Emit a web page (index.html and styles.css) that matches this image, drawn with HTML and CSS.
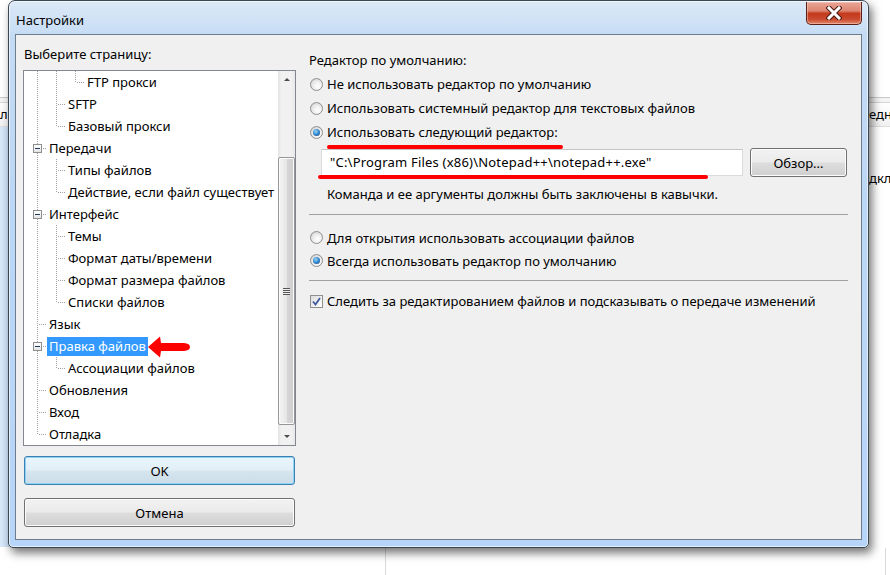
FILE: index.html
```html
<!DOCTYPE html>
<html lang="ru">
<head>
  <meta charset="UTF-8">
  <meta name="viewport" content="width=device-width, initial-scale=1.0">
  <title>Настройки</title>
  <link rel="stylesheet" href="styles.css">
</head>
<body>
<div class="desktop">

  <!-- bits of the application behind the dialog -->
  <div class="behind behind-left">
    <div class="behind-head"></div>
    <div class="behind-row">ле</div>
    <div class="behind-glass"></div>
  </div>
  <div class="behind behind-right">
    <div class="behind-head"></div>
    <div class="behind-row">едн</div>
    <div class="behind-text">дкл</div>
  </div>
  <div class="behind-line line-a"></div>
  <div class="behind-line line-b"></div>

  <div class="window">
    <div class="titlebar">
      <span class="title">Настройки</span>
      <div class="close-btn">
        <svg width="16" height="14" viewBox="0 0 16 14">
          <path d="M3 2 L13 12 M13 2 L3 12" stroke="#4a1a12" stroke-width="5" stroke-linecap="square"/>
          <path d="M3 2 L13 12 M13 2 L3 12" stroke="#fff" stroke-width="3" stroke-linecap="square"/>
        </svg>
      </div>
    </div>

    <div class="client">
      <div class="left-panel">
        <div class="caption">Выберите страницу:</div>

        <div class="tree">
          <div class="tree-list">
            <div class="node"><span class="g pipe"></span><span class="g pipe"></span><span class="g elbow"></span><span class="label">FTP прокси</span></div>
            <div class="node"><span class="g pipe"></span><span class="g tee"></span><span class="label">SFTP</span></div>
            <div class="node"><span class="g pipe"></span><span class="g elbow"></span><span class="label">Базовый прокси</span></div>
            <div class="node"><span class="g tee"><i class="expander"></i></span><span class="label">Передачи</span></div>
            <div class="node"><span class="g pipe"></span><span class="g tee"></span><span class="label">Типы файлов</span></div>
            <div class="node"><span class="g pipe"></span><span class="g elbow"></span><span class="label">Действие, если файл существует</span></div>
            <div class="node"><span class="g tee"><i class="expander"></i></span><span class="label">Интерфейс</span></div>
            <div class="node"><span class="g pipe"></span><span class="g tee"></span><span class="label">Темы</span></div>
            <div class="node"><span class="g pipe"></span><span class="g tee"></span><span class="label">Формат даты/времени</span></div>
            <div class="node"><span class="g pipe"></span><span class="g tee"></span><span class="label">Формат размера файлов</span></div>
            <div class="node"><span class="g pipe"></span><span class="g elbow"></span><span class="label">Списки файлов</span></div>
            <div class="node"><span class="g tee"></span><span class="label">Язык</span></div>
            <div class="node"><span class="g tee"><i class="expander"></i></span><span class="label selected">Правка файлов</span></div>
            <div class="node"><span class="g pipe"></span><span class="g elbow"></span><span class="label">Ассоциации файлов</span></div>
            <div class="node"><span class="g tee"></span><span class="label">Обновления</span></div>
            <div class="node"><span class="g tee"></span><span class="label">Вход</span></div>
            <div class="node"><span class="g elbow"></span><span class="label">Отладка</span></div>
          </div>

          <div class="scrollbar">
            <div class="sb-arrow"><span class="tri-up"></span></div>
            <div class="sb-track">
              <div class="sb-thumb"><span class="grip"></span></div>
            </div>
            <div class="sb-arrow"><span class="tri-down"></span></div>
          </div>

          <!-- red hand-drawn arrow pointing at the selected node -->
          <svg class="red-arrow" width="44" height="24" viewBox="0 0 44 24">
            <path d="M1 12 L13 1.5 L14 8 L37 8 Q43 8.5 43 12 Q43 15.5 37 16 L14 16 L13 22.5 Z" fill="#f00"/>
          </svg>
        </div>

        <button class="btn btn-default">OK</button>
        <button class="btn btn-cancel">Отмена</button>
      </div>

      <div class="right-panel">
        <div class="heading">Редактор по умолчанию:</div>
        <label class="option"><span class="radio"></span>Не использовать редактор по умолчанию</label>
        <label class="option"><span class="radio"></span>Использовать системный редактор для текстовых файлов</label>
        <label class="option"><span class="radio checked"></span>Использовать следующий редактор:</label>

        <div class="editor-row">
          <div class="textbox">"C:\Program Files (x86)\Notepad++\notepad++.exe"</div>
          <button class="btn btn-browse">Обзор...</button>
        </div>
        <div class="note">Команда и ее аргументы должны быть заключены в кавычки.</div>

        <div class="separator"></div>
        <label class="option option-tight first"><span class="radio"></span>Для открытия использовать ассоциации файлов</label>
        <label class="option option-tight"><span class="radio checked"></span>Всегда использовать редактор по умолчанию</label>

        <div class="separator sep-2"></div>
        <label class="option option-check"><span class="checkbox">
          <svg width="9" height="9" viewBox="0 0 9 9"><path d="M1 4.5 L3.5 7.5 L8 1" fill="none" stroke="#3d5a9e" stroke-width="1.8"/></svg>
        </span>Следить за редактированием файлов и подсказывать о передаче изменений</label>

        <div class="scribble scribble-1"></div>
        <div class="scribble scribble-2"></div>
      </div>
    </div>
  </div>
</div>
</body>
</html>
```

FILE: styles.css
```css
body {
  margin: 0;
  background: #ffffff;
  font-family: 'Noto Sans', 'Open Sans', sans-serif;
  font-size: 13px;
  color: #000000;
  overflow: hidden;
}

.desktop {
  position: relative;
  width: 890px;
  height: 575px;
  overflow: hidden;
}

/* application behind the dialog */
.behind {
  position: absolute;
  top: 97px;
  height: 460px;
}
.behind-left {
  left: 0;
  width: 12px;
}
.behind-right {
  left: 862px;
  width: 28px;
}
.behind-head {
  height: 4px;
  border-top: 1px solid #c9c9c9;
  border-bottom: 1px solid #d5d5d5;
  background: #f4f4f4;
}
.behind-row {
  height: 23px;
  line-height: 23px;
  background: linear-gradient(#ffffff, #f1f1f1);
  border-bottom: 1px solid #dedede;
  white-space: nowrap;
  overflow: hidden;
}
.behind-right .behind-row {
  padding-left: 7px;
}
.behind-text {
  margin-top: 42px;
  padding-left: 7px;
  white-space: nowrap;
}
.behind-glass {
  height: 420px;
  background: linear-gradient(to right, #d9e9f9, #c7def6);
}
.behind-line {
  position: absolute;
  top: 548px;
  width: 1px;
  height: 27px;
  background: #dadada;
}
.line-a { left: 385px; }
.line-b { left: 885px; }

/* dialog window */
.window {
  position: absolute;
  left: 8px;
  top: 0;
  width: 861px;
  height: 548px;
  box-sizing: border-box;
  display: flex;
  flex-direction: column;
  border: 1px solid #3b4653;
  border-radius: 7px 7px 5px 5px;
  background: linear-gradient(to bottom, #dce9f7 0, #c9def5 30px, #c4dbf4 34px, #bcd7f6 200px, #b7d5f8 100%);
  box-shadow: 3px 5px 10px rgba(0, 0, 0, 0.55), inset 0 0 0 1px rgba(255, 255, 255, 0.6);
}

.titlebar {
  height: 33px;
  flex: none;
  display: flex;
  align-items: flex-start;
  padding: 0 6px 0 7px;
}
.title {
  margin-top: 11px;
  line-height: 16px;
}
.close-btn {
  margin-left: auto;
  margin-top: 1px;
  width: 54px;
  height: 22px;
  display: flex;
  align-items: center;
  justify-content: center;
  border: 1px solid #5a1f17;
  border-top: none;
  border-radius: 0 0 5px 5px;
  background: linear-gradient(to bottom, #e9a596 0, #dc8672 40%, #c43a1d 52%, #c9492e 78%, #e3896c 100%);
  box-shadow: inset 0 0 0 1px rgba(255, 220, 210, 0.45);
}

.client {
  flex: 1;
  margin: 0 6px 7px 6px;
  border: 1px solid #6f7c8c;
  background: #f0f0f0;
  display: flex;
}

/* left side: tree of pages */
.left-panel {
  width: 273px;
  margin-left: 7px;
  display: flex;
  flex-direction: column;
}
.caption {
  margin-top: 11px;
  line-height: 16px;
  padding-left: 1px;
}
.tree {
  position: relative;
  margin-top: 8px;
  height: 376px;
  box-sizing: border-box;
  border: 1px solid #828790;
  background: #ffffff;
  display: flex;
}
.tree-list {
  flex: 1;
  padding-left: 4px;
  overflow: hidden;
}
.node {
  height: 22px;
  display: flex;
  align-items: center;
  white-space: nowrap;
}
.g {
  width: 19px;
  height: 22px;
  flex: none;
  display: flex;
  align-items: center;
  padding-left: 5px;
  box-sizing: border-box;
  background-repeat: no-repeat;
}
.pipe {
  background-image: repeating-linear-gradient(to bottom, #a0a0a0 0 1px, transparent 1px 2px);
  background-position: 9px 0;
  background-size: 1px 22px;
}
.tee {
  background-image:
    repeating-linear-gradient(to bottom, #a0a0a0 0 1px, transparent 1px 2px),
    repeating-linear-gradient(to right, #a0a0a0 0 1px, transparent 1px 2px);
  background-position: 9px 0, 11px 11px;
  background-size: 1px 22px, 8px 1px;
}
.elbow {
  background-image:
    repeating-linear-gradient(to bottom, #a0a0a0 0 1px, transparent 1px 2px),
    repeating-linear-gradient(to right, #a0a0a0 0 1px, transparent 1px 2px);
  background-position: 9px 0, 11px 11px;
  background-size: 1px 12px, 8px 1px;
}
.expander {
  width: 9px;
  height: 9px;
  box-sizing: border-box;
  border: 1px solid #8e8f8f;
  background: linear-gradient(#ffffff, #e4e4e4);
  display: flex;
  align-items: center;
  justify-content: center;
}
.expander::before {
  content: "";
  width: 5px;
  height: 1px;
  background: #1e395b;
}
.label {
  height: 19px;
  line-height: 19px;
  padding: 0 2px;
}
.label.selected {
  background: #3399ff;
  color: #ffffff;
}

.scrollbar {
  width: 17px;
  flex: none;
  display: flex;
  flex-direction: column;
  background: linear-gradient(to right, #e3e3e3, #f1f1f1 20%, #f1f1f1 80%, #e8e8e8);
}
.sb-arrow {
  height: 17px;
  display: flex;
  align-items: center;
  justify-content: center;
}
.tri-up {
  border-left: 3px solid transparent;
  border-right: 3px solid transparent;
  border-bottom: 3px solid #4d4d4d;
}
.tri-down {
  border-left: 3px solid transparent;
  border-right: 3px solid transparent;
  border-top: 3px solid #4d4d4d;
}
.sb-track {
  flex: 1;
}
.sb-thumb {
  margin-top: 69px;
  height: 268px;
  box-sizing: border-box;
  border: 1px solid #979797;
  border-radius: 2px;
  background: linear-gradient(to right, #f4f4f4 0, #e6e6e6 50%, #d6d6d6 51%, #cfcfcf 100%);
  box-shadow: inset 0 0 0 1px #fbfbfb;
  display: flex;
  align-items: center;
  justify-content: center;
}
.grip {
  width: 7px;
  height: 7px;
  background: repeating-linear-gradient(to bottom, #555 0 1px, #eee 1px 2px);
}

.red-arrow {
  position: absolute;
  left: 123px;
  top: 264px;
  filter: blur(0.7px);
}

/* buttons */
.btn {
  font-family: inherit;
  font-size: 13px;
  font-weight: normal;
  color: #000000;
  height: 29px;
  box-sizing: border-box;
  border: 1px solid #707070;
  border-radius: 3px;
  background: linear-gradient(to bottom, #f2f2f2 0, #ebebeb 48%, #dddddd 52%, #cfcfcf 100%);
  box-shadow: inset 0 0 0 1px #fcfcfc;
  padding: 0;
}
.left-panel .btn {
  width: 271px;
  margin-left: 1px;
}
.btn-default {
  margin-top: 10px;
  border-color: #3c7fb1;
  box-shadow: inset 0 0 0 1px #8ed3f6;
  background: linear-gradient(to bottom, #eaf6fd 0, #e3eff7 48%, #d6e5ee 52%, #cbdde9 100%);
}
.btn-cancel {
  margin-top: 13px;
}

/* right side: editor options */
.right-panel {
  position: relative;
  margin-left: 13px;
  width: 539px;
  padding-top: 17px;
  display: flex;
  flex-direction: column;
}
.heading {
  line-height: 16px;
  margin-bottom: 4px;
}
.option {
  height: 24px;
  display: flex;
  align-items: center;
  white-space: nowrap;
}
.option-tight {
  height: 23px;
}
.option-tight.first {
  margin-top: 11px;
}
.option-check {
  margin-top: 8px;
}
.radio {
  width: 13px;
  height: 13px;
  box-sizing: border-box;
  margin: 0 4px 0 1px;
  border: 1px solid #8e8f8f;
  border-radius: 50%;
  background: radial-gradient(circle at 60% 65%, #ffffff 0, #f0f0f0 40%, #c8c8c8 100%);
  display: flex;
  align-items: center;
  justify-content: center;
}
.radio.checked::before {
  content: "";
  width: 7px;
  height: 7px;
  border-radius: 50%;
  background: radial-gradient(circle at 40% 35%, #9fd6f8 0, #3b8fd4 45%, #0d3b74 100%);
}
.checkbox {
  width: 13px;
  height: 13px;
  box-sizing: border-box;
  margin: 0 4px 0 1px;
  border: 1px solid #8e8f8f;
  background: linear-gradient(135deg, #dcdcdc, #ffffff);
  display: flex;
  align-items: center;
  justify-content: center;
}

.editor-row {
  margin-top: 4px;
  height: 29px;
  display: flex;
  align-items: center;
}
.textbox {
  margin-left: 12px;
  width: 422px;
  height: 27px;
  box-sizing: border-box;
  border: 1px solid #dadada;
  border-top-color: #c5c5c5;
  background: #ffffff;
  line-height: 25px;
  padding-left: 8px;
  letter-spacing: 0.2px;
  white-space: nowrap;
}
.btn-browse {
  margin-left: 7px;
  width: 97px;
}
.note {
  margin-top: 9px;
  margin-left: 18px;
  line-height: 16px;
}
.separator {
  margin-top: 12px;
  height: 1px;
  background: #a0a0a0;
}
.sep-2 {
  margin-top: 8px;
}

/* red marker strokes drawn over the screenshot */
.scribble {
  position: absolute;
  height: 4px;
  background: #ff0000;
  border-radius: 2px;
  filter: blur(0.7px);
}
.scribble-1 {
  left: 18px;
  top: 110px;
  width: 236px;
}
.scribble-2 {
  left: 9px;
  top: 140px;
  width: 390px;
}
```
